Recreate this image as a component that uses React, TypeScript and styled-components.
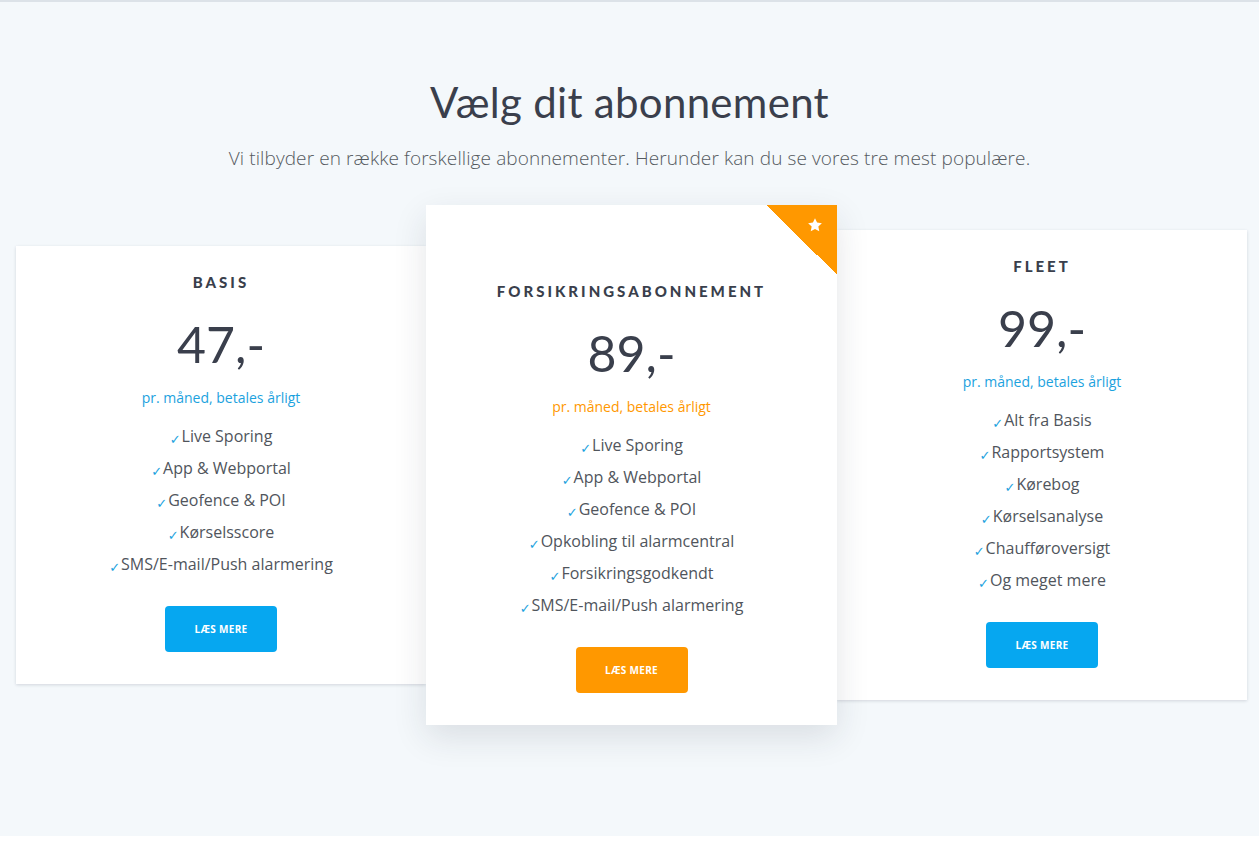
import { FC } from 'react'
import styled, { createGlobalStyle, css } from 'styled-components'

type Accent = 'blue' | 'orange'

interface Plan {
  name: string
  price: string
  accent: Accent
  featured?: boolean
  features: string[]
}

const colors = {
  blue: '#06a7f0',
  blueText: '#1ca2de',
  orange: '#ff9800',
  ink: '#3a3f4c',
  body: '#50555c',
  bg: '#f4f8fb',
}

const plans: Plan[] = [
  {
    name: 'Basis',
    price: '47,-',
    accent: 'blue',
    features: [
      'Live Sporing',
      'App & Webportal',
      'Geofence & POI',
      'Kørselsscore',
      'SMS/E-mail/Push alarmering',
    ],
  },
  {
    name: 'Forsikringsabonnement',
    price: '89,-',
    accent: 'orange',
    featured: true,
    features: [
      'Live Sporing',
      'App & Webportal',
      'Geofence & POI',
      'Opkobling til alarmcentral',
      'Forsikringsgodkendt',
      'SMS/E-mail/Push alarmering',
    ],
  },
  {
    name: 'Fleet',
    price: '99,-',
    accent: 'blue',
    features: [
      'Alt fra Basis',
      'Rapportsystem',
      'Kørebog',
      'Kørselsanalyse',
      'Chaufføroversigt',
      'Og meget mere',
    ],
  },
]

const GlobalStyle = createGlobalStyle`
  html, body {
    margin: 0;
    padding: 0;
    background: #fff;
  }
  body {
    font-family: 'Open Sans', 'Liberation Sans', sans-serif;
  }
`

const Section = styled.section`
  background: ${colors.bg};
  border-top: 2px solid #dce2e8;
  height: 836px;
  padding-top: 75px;
  box-sizing: border-box;
  display: flex;
  flex-direction: column;
  align-items: center;
`

const Heading = styled.h1`
  margin: 0;
  font-family: Lato, 'Liberation Sans', sans-serif;
  font-weight: 400;
  font-size: 42px;
  line-height: 50px;
  color: ${colors.ink};
  letter-spacing: 0.3px;
`

const Lead = styled.p`
  margin: 18px 0 0;
  font-family: 'Open Sans', 'Liberation Sans', sans-serif;
  font-weight: 300;
  font-size: 19px;
  line-height: 26px;
  letter-spacing: 0.1px;
  color: #555a60;
`

const Row = styled.div`
  margin-top: 34px;
  align-self: stretch;
  padding: 0 12px 0 16px;
  display: grid;
  grid-template-columns: 410px 411px 410px;
  align-items: center;
`

const Card = styled.div<{ $featured?: boolean }>`
  position: relative;
  background: #fff;
  display: flex;
  flex-direction: column;
  align-items: center;
  padding: 26px 20px 32px;
  box-shadow: 0 1px 3px rgba(30, 40, 60, 0.16);
  ${(p) =>
    p.$featured &&
    css`
      padding-top: 76px;
      z-index: 1;
      box-shadow: 0 12px 32px rgba(30, 40, 60, 0.12);
    `}
`

const Ribbon = styled.div`
  position: absolute;
  top: 0;
  right: 0;
  width: 70px;
  height: 70px;
  background: linear-gradient(45deg, transparent 50%, ${colors.orange} 50%);
  display: flex;
  justify-content: flex-end;
  padding: 12px 14px 0 0;
  box-sizing: border-box;
`

const PlanName = styled.h3`
  margin: 0;
  font-family: Lato, 'Liberation Sans', sans-serif;
  font-weight: 900;
  font-size: 15px;
  line-height: 20px;
  letter-spacing: 3px;
  text-transform: uppercase;
  color: ${colors.ink};
`

const Price = styled.div`
  margin-top: 22px;
  font-family: Lato, 'Liberation Sans', sans-serif;
  font-weight: 400;
  font-size: 50px;
  line-height: 60px;
  color: ${colors.ink};
`

const Period = styled.div<{ $accent: Accent }>`
  margin-top: 14px;
  font-size: 14px;
  line-height: 20px;
  color: ${(p) => (p.$accent === 'orange' ? colors.orange : colors.blueText)};
`

const Features = styled.ul`
  list-style: none;
  margin: 12px 0 0;
  padding: 0;
  text-align: center;
`

const Feature = styled.li`
  height: 32px;
  font-size: 16px;
  line-height: 32px;
  color: ${colors.body};
`

const Tick = styled.span`
  display: inline-block;
  font-family: 'DejaVu Sans', sans-serif;
  font-size: 13px;
  line-height: 1;
  color: ${colors.blueText};
  vertical-align: -2px;
  margin-right: 1px;
`

const Button = styled.button<{ $accent: Accent }>`
  margin-top: 26px;
  width: 112px;
  height: 46px;
  border: none;
  border-radius: 4px;
  background: ${(p) => (p.$accent === 'orange' ? colors.orange : colors.blue)};
  color: #fff;
  font-family: 'Open Sans', 'Liberation Sans', sans-serif;
  font-weight: 700;
  font-size: 10px;
  letter-spacing: 0.3px;
  cursor: pointer;
`

const Star: FC = () => (
  <svg width="16" height="16" viewBox="0 0 24 24" fill="#fff">
    <path d="M12 1.8l3.1 6.6 7.2.9-5.3 5 1.4 7.1L12 17.9l-6.4 3.5 1.4-7.1-5.3-5 7.2-.9z" />
  </svg>
)

const PlanCard: FC<{ plan: Plan }> = ({ plan }) => (
  <Card $featured={plan.featured}>
    {plan.featured && (
      <Ribbon>
        <Star />
      </Ribbon>
    )}
    <PlanName>{plan.name}</PlanName>
    <Price>{plan.price}</Price>
    <Period $accent={plan.accent}>pr. måned, betales årligt</Period>
    <Features>
      {plan.features.map((f) => (
        <Feature key={f}>
          <Tick>✓</Tick>
          {f}
        </Feature>
      ))}
    </Features>
    <Button $accent={plan.accent}>LÆS MERE</Button>
  </Card>
)

const App: FC = () => (
  <>
    <GlobalStyle />
    <Section>
      <Heading>Vælg dit abonnement</Heading>
      <Lead>
        Vi tilbyder en række forskellige abonnementer. Herunder kan du se vores
        tre mest populære.
      </Lead>
      <Row>
        {plans.map((p) => (
          <PlanCard key={p.name} plan={p} />
        ))}
      </Row>
    </Section>
  </>
)

export default App
